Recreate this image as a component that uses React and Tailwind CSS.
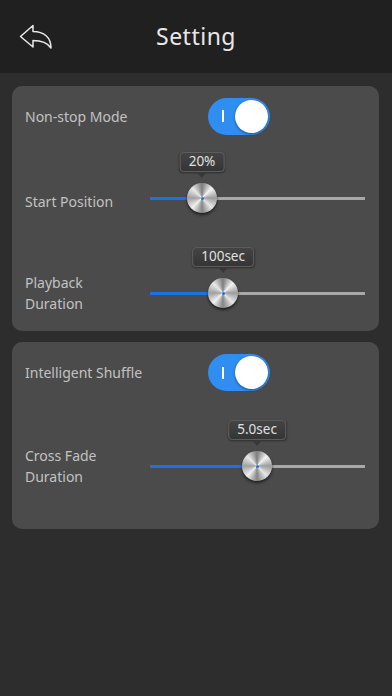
import React from "react";

const font = { fontFamily: '"Noto Sans", "Open Sans", sans-serif' };

function Toggle() {
  return (
    <div className="relative flex h-[37px] w-[62px] items-center rounded-full bg-[#2f8ef0]">
      <div className="ml-[14px] h-[12px] w-[2px] bg-white" />
      <div className="absolute right-[2px] top-[2px] h-[33px] w-[33px] rounded-full bg-white shadow-[0_1px_3px_rgba(0,0,0,0.4)]" />
    </div>
  );
}

function Slider({ pct, label }) {
  return (
    <div className="relative flex h-[32px] w-[215px] items-center">
      <div className="flex h-[3px] w-full">
        <div className="h-full bg-[#1a72e6]" style={{ width: `${pct}%` }} />
        <div className="h-full flex-1 bg-[#a8a8a8]" />
      </div>
      <div
        className="absolute top-[1px] -ml-[15px] flex h-[30px] w-[30px] items-center justify-center rounded-full bg-[conic-gradient(#7d7d7d,#f2f2f2,#9c9c9c,#e6e6e6,#858585,#f0f0f0,#a0a0a0,#e8e8e8,#7d7d7d)] shadow-[0_2px_3px_rgba(0,0,0,0.6)]"
        style={{ left: `${pct}%` }}
      >
        <div className="h-[3px] w-[3px] rounded-full bg-[#1a72e6]" />
      </div>
      <div
        className="absolute top-[-30px] flex -translate-x-1/2 flex-col items-center"
        style={{ left: `${pct}%` }}
      >
        <div className="flex h-[20px] items-center rounded-[4px] border border-[#5c5c5c] bg-[linear-gradient(#444,#353535)] px-[8px] text-[13.5px] leading-none text-[#e0e0e0] shadow-[0_1px_2px_rgba(0,0,0,0.4)]">
          {label}
        </div>
        <div className="h-0 w-0 border-x-[5px] border-t-[6px] border-x-transparent border-t-[#383838]" />
      </div>
    </div>
  );
}

function Row({ label, children, className }) {
  return (
    <div className={"flex items-center " + className}>
      <div className="w-[125px] text-[14px] leading-[21px] text-[#c2c2c2]">{label}</div>
      {children}
    </div>
  );
}

export default function App() {
  return (
    <div className="flex h-[696px] w-[392px] flex-col bg-[#2d2d2d]" style={font}>
      <div className="relative flex h-[73px] items-center justify-center bg-[#202020]">
        <svg
          className="absolute left-[19px] top-[24px]"
          width="34"
          height="26"
          viewBox="19 24 34 26"
          fill="none"
          stroke="#e8e8e8"
          strokeWidth="1.5"
          strokeLinejoin="round"
        >
          <path d="M20.5 36.5 L33 25.5 L33 31.5 C44 31.5 51 37.5 51 48 C47 42 41 40.5 33 40.5 L33 47 Z" />
        </svg>
        <div className="text-[23px] tracking-[0.5px] text-[#e8e8e8]">Setting</div>
      </div>

      <div className="ml-[12px] mr-[13px] mt-[13px] flex flex-col rounded-[10px] bg-[#4b4b4b] pb-[15px] pl-[13px]">
        <Row label="Non-stop Mode" className="h-[60px]">
          <div className="ml-[58px]">
            <Toggle />
          </div>
        </Row>
        <Row label={<span className="relative top-[3px]">Start Position</span>} className="mt-[36px] h-[32px]">
          <Slider pct={24.2} label="20%" />
        </Row>
        <Row label={<>Playback<br />Duration</>} className="mt-[56px] h-[46px]">
          <Slider pct={34} label="100sec" />
        </Row>
      </div>

      <div className="ml-[12px] mr-[13px] mt-[11px] flex flex-col rounded-[10px] bg-[#4b4b4b] pb-[40px] pl-[13px]">
        <Row label="Intelligent Shuffle" className="h-[61px]">
          <div className="ml-[58px]">
            <Toggle />
          </div>
        </Row>
        <Row label={<>Cross Fade<br />Duration</>} className="mt-[40px] h-[46px]">
          <Slider pct={49.8} label="5.0sec" />
        </Row>
      </div>
    </div>
  );
}
